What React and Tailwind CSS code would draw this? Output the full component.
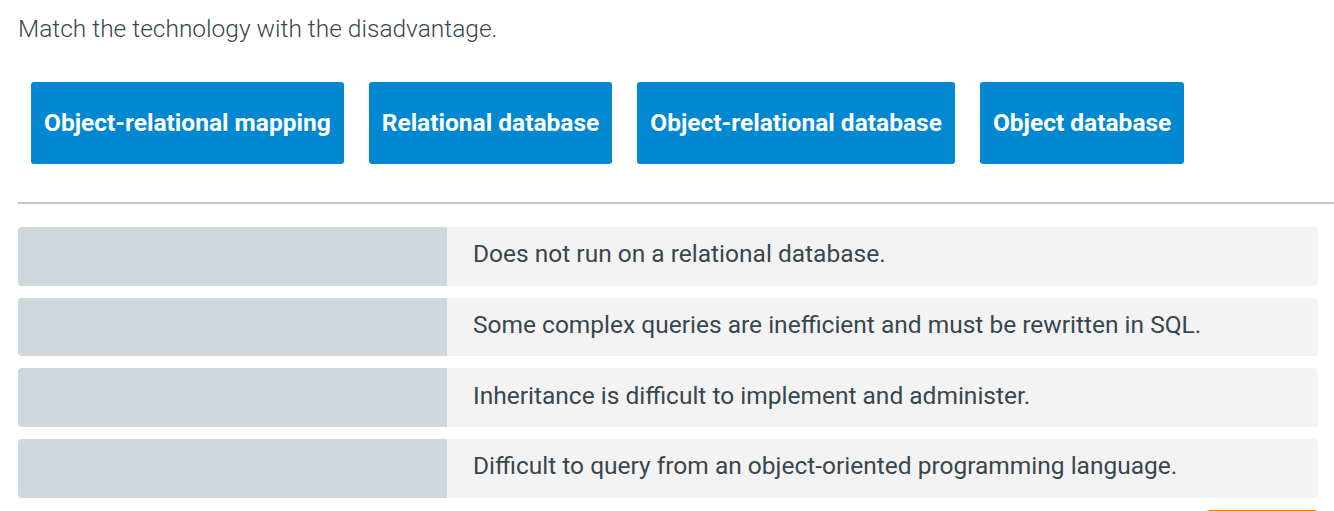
import React from 'react';

const choices = [
  'Object-relational mapping',
  'Relational database',
  'Object-relational database',
  'Object database',
];

const rows = [
  'Does not run on a relational database.',
  'Some complex queries are inefficient and must be rewritten in SQL.',
  'Inheritance is difficult to implement and administer.',
  'Difficult to query from an object-oriented programming language.',
];

const App = () => {
  return (
    <div className="min-h-screen bg-white pl-[18px] pt-[14px] font-['Roboto',sans-serif] text-[#37474f]">
      <h1 className="text-[24.5px] font-light leading-[30px]">
        Match the technology with the disadvantage.
      </h1>

      <div className="mt-[38px] flex gap-[25px] pl-[13px]">
        {choices.map((label) => (
          <button
            key={label}
            className="h-[82px] rounded-[3px] bg-[#0288d1] px-[13px] text-[24.5px] font-bold text-white"
          >
            {label}
          </button>
        ))}
      </div>

      <div className="mt-[38px] h-[2px] bg-[#c6c6c6]" />

      <ul className="mt-[23px] mr-[16px] space-y-[12px]">
        {rows.map((text) => (
          <li key={text} className="flex h-[58.67px] overflow-hidden rounded-[4px]">
            <div className="w-[429px] bg-[#cfd8dc]" />
            <div className="flex flex-1 items-center bg-[#f3f3f3] pb-[3px] pl-[26px] text-[24.5px]">
              {text}
            </div>
          </li>
        ))}
      </ul>

      <div className="mt-[12px] mr-[16px] flex justify-end">
        <button className="h-[40px] w-[112px] rounded-[4px] bg-[#f57c00]" />
      </div>
    </div>
  );
};

export default App;
